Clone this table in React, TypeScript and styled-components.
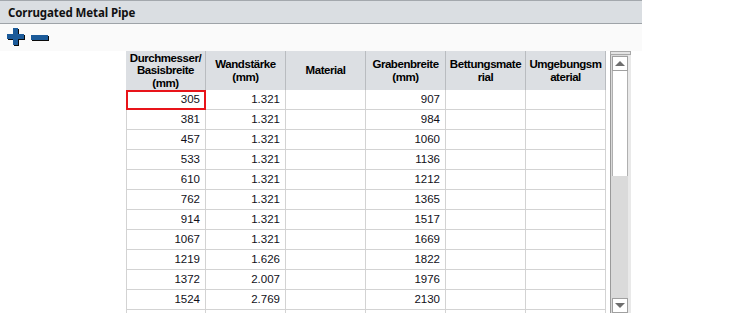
import React from "react";
import styled, { createGlobalStyle, css } from "styled-components";

const GlobalStyle = createGlobalStyle`
  html, body {
    margin: 0;
    padding: 0;
    background: #ffffff;
  }
  body {
    font-family: "Liberation Sans", Arial, sans-serif;
    overflow: hidden;
  }
`;

const Panel = styled.div`
  display: flex;
  flex-direction: column;
  width: 755px;
  height: 313px;
  overflow: hidden;
`;

const TitleBar = styled.div`
  width: 642px;
  height: 24px;
  box-sizing: border-box;
  border-top: 1px solid #a3a8ad;
  border-bottom: 1px solid #9ea3a8;
  background: #dadee2;
  display: flex;
  align-items: center;
  padding-left: 8px;
  font-family: "Noto Sans", "Liberation Sans", sans-serif;
  font-weight: 700;
  font-size: 11.5px;
  letter-spacing: -0.1px;
  color: #111;
`;

const Toolbar = styled.div`
  width: 642px;
  height: 27px;
  background: #fafafa;
  display: flex;
  align-items: flex-start;
  gap: 6px;
  padding: 4px 0 0 7px;
  box-sizing: border-box;
`;

const ToolButton = styled.button`
  border: 0;
  padding: 0;
  margin: 0;
  background: transparent;
  width: 18px;
  height: 18px;
  display: block;
  cursor: pointer;
`;

const GridArea = styled.div`
  display: flex;
  flex-direction: row;
  padding-left: 126px;
  gap: 4px;
  flex: 1;
  min-height: 0;
`;

const Table = styled.div`
  width: 480px;
  display: flex;
  flex-direction: column;
`;

const HeaderRow = styled.div`
  display: grid;
  grid-template-columns: repeat(6, 80px);
  height: 39px;
  flex-shrink: 0;
  background: #dcdfe3;
`;

const HeaderCell = styled.div`
  display: flex;
  align-items: center;
  justify-content: center;
  text-align: center;
  border-right: 1px solid #b9bcc0;
  font-size: 11.5px;
  font-weight: bold;
  line-height: 12.5px;
  letter-spacing: -0.45px;
  color: #000;
  white-space: nowrap;
`;

const BodyRow = styled.div`
  display: grid;
  grid-template-columns: repeat(6, 80px);
  height: 20px;
  flex-shrink: 0;
`;

const Cell = styled.div<{ $first?: boolean; $selected?: boolean }>`
  box-sizing: border-box;
  border-right: 1px solid #d3d3d3;
  border-bottom: 1px solid #d3d3d3;
  ${(p) =>
    p.$first &&
    css`
      border-left: 1px solid #d3d3d3;
    `}
  font-size: 11.5px;
  line-height: 19px;
  text-align: right;
  padding-right: 5px;
  color: #101018;
  ${(p) =>
    p.$selected &&
    css`
      outline: 2px solid #e8141a;
      outline-offset: -2px;
    `}
`;

const ScrollBar = styled.div`
  width: 21px;
  display: flex;
  flex-direction: column;
  background: #dadada;
  border-left: 1px solid #9a9a9a;
  box-sizing: border-box;
`;

const ScrollCap = styled.div`
  margin-left: -1px;
  background: #e4e4e4;
  border: 1px solid #a8a8a8;
  box-sizing: border-box;
  height: 4px;
`;

const ScrollTrack = styled.div`
  flex: 1;
  display: flex;
  flex-direction: column;
  padding: 0 3px 0 1px;
  background: linear-gradient(to right, #dadada 17px, #e9e9e9 17px);
`;

const ScrollButton = styled.div`
  height: 15px;
  margin-top: 1px;
  background: #ffffff;
  border: 1px solid #a0a0a0;
  box-sizing: border-box;
  display: flex;
  align-items: center;
  justify-content: center;
`;

const Thumb = styled.div`
  height: 105px;
  background: #ffffff;
  border-left: 1px solid #b0b0b0;
  border-right: 1px solid #b0b0b0;
  box-sizing: border-box;
`;

const Spacer = styled.div`
  flex: 1;
`;

const Arrow = styled.div<{ $down?: boolean }>`
  width: 0;
  height: 0;
  border-left: 5px solid transparent;
  border-right: 5px solid transparent;
  ${(p) =>
    p.$down
      ? css`
          border-top: 5px solid #6e6e6e;
        `
      : css`
          border-bottom: 5px solid #6e6e6e;
        `}
`;

const PlusIcon = () => (
  <svg width="18" height="18" viewBox="0 0 18 18">
    <rect x="7" y="1" width="5" height="17" fill="#0a0a0a" />
    <rect x="1" y="7" width="17" height="5" fill="#0a0a0a" />
    <rect x="6" y="0" width="5" height="17" fill="#1b5a99" />
    <rect x="0" y="6" width="17" height="5" fill="#1b5a99" />
  </svg>
);

const MinusIcon = () => (
  <svg width="18" height="18" viewBox="0 0 18 18">
    <rect x="1" y="8" width="17" height="5" fill="#0a0a0a" />
    <rect x="0" y="7" width="17" height="5" fill="#1b5a99" />
  </svg>
);

const headers: React.ReactNode[] = [
  <>
    Durchmesser/
    <br />
    Basisbreite
    <br />
    (mm)
  </>,
  <>
    Wandstärke
    <br />
    (mm)
  </>,
  <>Material</>,
  <>
    Grabenbreite
    <br />
    (mm)
  </>,
  <>
    Bettungsmate
    <br />
    rial
  </>,
  <>
    Umgebungsm
    <br />
    aterial
  </>,
];

const rows: [string, string, string][] = [
  ["305", "1.321", "907"],
  ["381", "1.321", "984"],
  ["457", "1.321", "1060"],
  ["533", "1.321", "1136"],
  ["610", "1.321", "1212"],
  ["762", "1.321", "1365"],
  ["914", "1.321", "1517"],
  ["1067", "1.321", "1669"],
  ["1219", "1.626", "1822"],
  ["1372", "2.007", "1976"],
  ["1524", "2.769", "2130"],
  ["", "", ""],
];

export default function App() {
  return (
    <Panel>
      <GlobalStyle />
      <TitleBar>Corrugated Metal Pipe</TitleBar>
      <Toolbar>
        <ToolButton title="Hinzufügen">
          <PlusIcon />
        </ToolButton>
        <ToolButton title="Entfernen">
          <MinusIcon />
        </ToolButton>
      </Toolbar>
      <GridArea>
        <Table>
          <HeaderRow>
            {headers.map((h, i) => (
              <HeaderCell key={i}>
                <span>{h}</span>
              </HeaderCell>
            ))}
          </HeaderRow>
          {rows.map(([d, w, g], i) => (
            <BodyRow key={i}>
              <Cell $first $selected={i === 0}>
                {d}
              </Cell>
              <Cell>{w}</Cell>
              <Cell />
              <Cell>{g}</Cell>
              <Cell />
              <Cell />
            </BodyRow>
          ))}
        </Table>
        <ScrollBar>
          <ScrollCap />
          <ScrollTrack>
            <ScrollButton>
              <Arrow />
            </ScrollButton>
            <Thumb />
            <Spacer />
            <ScrollButton>
              <Arrow $down />
            </ScrollButton>
          </ScrollTrack>
        </ScrollBar>
      </GridArea>
    </Panel>
  );
}
